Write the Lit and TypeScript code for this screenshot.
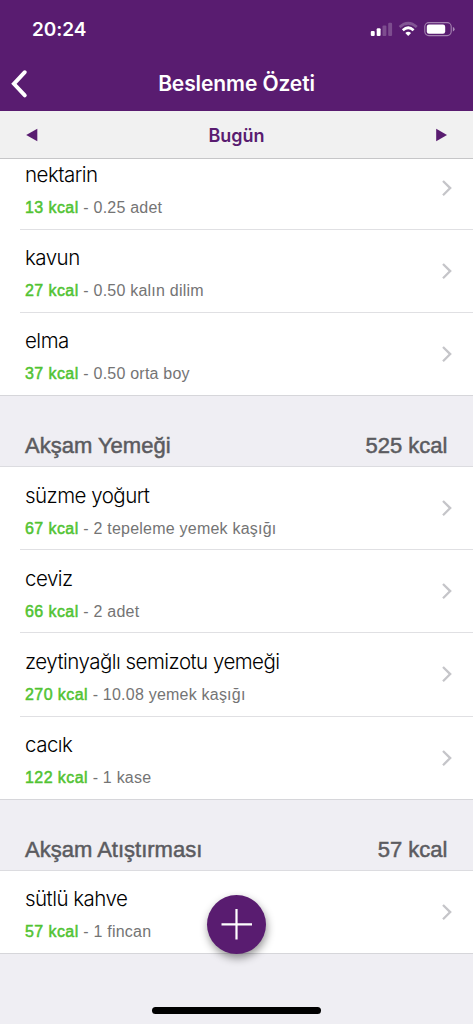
import { LitElement, html, css } from "lit";
import { customElement, property } from "lit/decorators.js";

interface Food {
  name: string;
  kcal: number;
  amount: string;
}

interface Meal {
  title: string;
  total?: number;
  foods: Food[];
}

const meals: Meal[] = [
  {
    title: "",
    foods: [
      { name: "nektarin", kcal: 13, amount: "0.25 adet" },
      { name: "kavun", kcal: 27, amount: "0.50 kalın dilim" },
      { name: "elma", kcal: 37, amount: "0.50 orta boy" },
    ],
  },
  {
    title: "Akşam Yemeği",
    total: 525,
    foods: [
      { name: "süzme yoğurt", kcal: 67, amount: "2 tepeleme yemek kaşığı" },
      { name: "ceviz", kcal: 66, amount: "2 adet" },
      { name: "zeytinyağlı semizotu yemeği", kcal: 270, amount: "10.08 yemek kaşığı" },
      { name: "cacık", kcal: 122, amount: "1 kase" },
    ],
  },
  {
    title: "Akşam Atıştırması",
    total: 57,
    foods: [{ name: "sütlü kahve", kcal: 57, amount: "1 fincan" }],
  },
];

@customElement("status-bar")
class StatusBar extends LitElement {
  static styles = css`
    :host {
      display: flex;
      justify-content: space-between;
      height: 58px;
      padding: 0 17px 0 32px;
      color: #fff;
    }
    .time {
      font: 600 19px/59px Inter, sans-serif;
      letter-spacing: -0.05px;
    }
    .icons {
      display: block;
      margin-top: 20px;
    }
  `;
  render() {
    return html`
      <span class="time">20:24</span>
      <svg class="icons" width="86" height="18" viewBox="0 0 86 18" fill="#fff">
        <rect x="0.8" y="11" width="3.9" height="5" rx="1.1" />
        <rect x="6.7" y="8.2" width="3.9" height="7.8" rx="1.1" />
        <rect x="12.5" y="5.4" width="3.9" height="10.6" rx="1.1" opacity="0.22" />
        <rect x="18.2" y="2.8" width="3.9" height="13.2" rx="1.1" opacity="0.22" />
        <path d="M29.6 7.1Q38.2-.6 46.8 7.1" fill="none" stroke="#fff" stroke-width="2.7" opacity="0.25" />
        <path d="M32.8 10.2Q38.2 5.3 43.6 10.2" fill="none" stroke="#fff" stroke-width="2.7" />
        <path d="M35.3 12.9Q38.2 10.4 41.1 12.9L38.2 15.9Z" />
        <rect x="54.8" y="2.6" width="26.4" height="13" rx="4" fill="none" stroke="#fff" stroke-width="1.1" opacity="0.45" />
        <rect x="56.8" y="4.5" width="18.4" height="9.2" rx="2.2" />
        <path d="M82.9 7Q84.6 7.6 84.6 9.2T82.9 11.4Z" opacity="0.5" />
      </svg>
    `;
  }
}

@customElement("food-row")
class FoodRow extends LitElement {
  @property({ attribute: false }) food!: Food;
  @property({ type: Boolean, reflect: true }) last = false;

  static styles = css`
    :host {
      display: flex;
      align-items: center;
      box-sizing: border-box;
      height: 83.2px;
      margin-left: 20px;
      padding: 0 20px 0 5px;
      border-bottom: 1px solid #e0e0e3;
    }
    :host([last]) {
      margin-left: 0;
      padding-left: 25px;
      border-bottom-color: #d6d6da;
    }
    .text {
      flex: 1;
      padding-top: 6px;
      white-space: nowrap;
    }
    .name {
      font: 300 20.5px/28px Inter, sans-serif;
      letter-spacing: -0.52px;
      color: #000;
    }
    .detail {
      margin-top: 7px;
      font: 16px/24px "Liberation Sans", sans-serif;
      letter-spacing: 0.22px;
      color: #747474;
    }
    .kcal {
      letter-spacing: 0.42px;
      color: #51c332;
      -webkit-text-stroke: 0.5px #51c332;
    }
  `;
  render() {
    return html`
      <div class="text">
        <div class="name">${this.food.name}</div>
        <div class="detail"><span class="kcal">${this.food.kcal} kcal</span> - ${this.food.amount}</div>
      </div>
      <svg width="12" height="18" viewBox="0 0 12 18" fill="none" stroke="#c5c5c9" stroke-width="2.3">
        <path d="M2 2L9.2 9.1L2 16.2" />
      </svg>
    `;
  }
}

@customElement("app-root")
class AppRoot extends LitElement {
  static styles = css`
    :host {
      position: relative;
      display: flex;
      flex-direction: column;
      height: 1024px;
      overflow: hidden;
      background: #efeef3;
    }
    .top {
      flex: none;
      height: 111px;
      background: #591c70;
      color: #fff;
    }
    .nav {
      display: grid;
      grid-template-columns: 40px 1fr 40px;
      align-items: center;
      height: 51px;
    }
    .back {
      display: block;
      margin-left: 9.5px;
    }
    .title {
      text-align: center;
      font: 600 21px/50px Inter, sans-serif;
      letter-spacing: -0.1px;
    }
    .day {
      flex: none;
      display: flex;
      align-items: center;
      justify-content: space-between;
      box-sizing: border-box;
      height: 48px;
      padding: 0 26px;
      background: #f1f1f1;
      border-bottom: 1px solid #c6c6c8;
      color: #591c70;
      font: 600 18px/48px Inter, sans-serif;
    }
    .today {
      padding-top: 2px;
    }
    .list {
      flex: 1;
      min-height: 0;
      overflow: hidden;
    }
    .scrolled {
      margin-top: -12.5px;
    }
    .foods {
      background: #fff;
    }
    .meal {
      display: flex;
      justify-content: space-between;
      box-sizing: border-box;
      height: 70.9px;
      padding: 30px 25.5px 0 25px;
      border-bottom: 1px solid #dcdce0;
      font: 22px/40px "Liberation Sans", sans-serif;
      color: #5b5b60;
      -webkit-text-stroke: 0.5px #5b5b60;
    }
    .add {
      position: absolute;
      left: 207px;
      top: 895px;
      width: 59px;
      height: 59px;
      padding: 0;
      border: 0;
      border-radius: 50%;
      background: #591c70;
      box-shadow: 1px 4px 8px rgba(0, 0, 0, 0.42);
    }
    .plus {
      display: block;
    }
    .home {
      position: absolute;
      left: 152px;
      top: 1007px;
      width: 169px;
      height: 6.5px;
      border-radius: 4px;
      background: #000;
    }
  `;

  render() {
    return html`
      <div class="top">
        <status-bar></status-bar>
        <div class="nav">
          <svg class="back" width="20" height="30" viewBox="0 0 20 30" fill="none" stroke="#fff" stroke-width="3.9" stroke-linecap="round" stroke-linejoin="miter">
            <path d="M14.8 3.2L3.9 14.8L14.8 26.4" />
          </svg>
          <div class="title">Beslenme Özeti</div>
        </div>
      </div>
      <div class="day">
        <svg width="12" height="14" viewBox="0 0 12 14" fill="#591c70"><path d="M11.3 .8V13.2L.2 7Z" /></svg>
        <span class="today">Bugün</span>
        <svg width="12" height="14" viewBox="0 0 12 14" fill="#591c70"><path d="M1.2 .8V13.2L12 7Z" /></svg>
      </div>
      <div class="list">
        <div class="scrolled">
          ${meals.map(
            (meal) => html`
              ${meal.title
                ? html`<div class="meal"><span>${meal.title}</span><span>${meal.total} kcal</span></div>`
                : ""}
              <div class="foods">
                ${meal.foods.map(
                  (food, i) => html`<food-row .food=${food} ?last=${i === meal.foods.length - 1}></food-row>`
                )}
              </div>
            `
          )}
        </div>
      </div>
      <button class="add" aria-label="Ekle">
        <svg class="plus" width="59" height="59" viewBox="0 0 59 59" stroke="#fff" stroke-width="2.2">
          <path d="M29.5 14V44.5M14.5 29.3H45" />
        </svg>
      </button>
      <div class="home"></div>
    `;
  }
}
